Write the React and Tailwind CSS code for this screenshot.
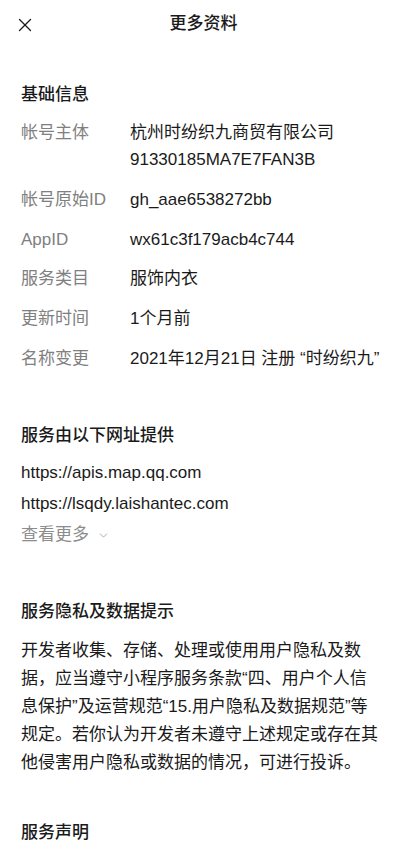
import { X, ChevronDown } from 'lucide-react'

const FONT = { fontFamily: '"Liberation Sans", "Noto Sans CJK SC", sans-serif' }

const basics = [
  { label: '帐号主体', value: ['杭州时纷织九商贸有限公司', '91330185MA7E7FAN3B'] },
  { label: '帐号原始ID', value: ['gh_aae6538272bb'] },
  { label: 'AppID', value: ['wx61c3f179acb4c744'] },
  { label: '服务类目', value: ['服饰内衣'] },
  { label: '更新时间', value: ['1个月前'] },
  { label: '名称变更', value: ['2021年12月21日 注册 “时纷织九”'] },
]

const urls = ['https://apis.map.qq.com', 'https://lsqdy.laishantec.com']

// wrapped the same way the app does it
const privacy = [
  '开发者收集、存储、处理或使用用户隐私及数',
  '据，应当遵守小程序服务条款“四、用户个人信',
  '息保护”及运营规范“15.用户隐私及数据规范”等',
  '规定。若你认为开发者未遵守上述规定或存在其',
  '他侵害用户隐私或数据的情况，可进行投诉。',
]

function Heading({ children, className = '' }) {
  return (
    <h2 className={`text-[17px] font-medium leading-[24px] text-[#1a1a1a] ${className}`}>
      {children}
    </h2>
  )
}

export default function App() {
  return (
    <div className="h-[842px] w-[407px] overflow-hidden bg-white" style={FONT}>
      <header className="relative flex h-[48px] items-center justify-center">
        <button className="absolute left-[14px] top-[14px] grid h-[20px] w-[20px] place-items-center text-[#1a1a1a]">
          <X size={22} strokeWidth={1.4} />
        </button>
        <h1 className="text-[17px] font-medium text-[#1a1a1a]">更多资料</h1>
      </header>

      <div className="px-[21px]">
        <Heading className="mt-[35px]">基础信息</Heading>
        <div className="mt-[12px] flex flex-col gap-[12.8px]">
          {basics.map((row) => (
            <div key={row.label} className="flex text-[17px] leading-[27px]">
              <span className="w-[109px] shrink-0 text-[#808080]">{row.label}</span>
              <div className="whitespace-nowrap text-[#1a1a1a]">
                {row.value.map((v) => (
                  <p key={v}>{v}</p>
                ))}
              </div>
            </div>
          ))}
        </div>

        <Heading className="mt-[52px]">服务由以下网址提供</Heading>
        <div className="mt-[9px] flex flex-col text-[17px] leading-[31px] text-[#1a1a1a]">
          {urls.map((u) => (
            <p key={u}>{u}</p>
          ))}
          <button className="flex items-center gap-[8px] text-[#8c8c8c]">
            查看更多 <ChevronDown size={13} strokeWidth={1.3} className="mt-[2px]" />
          </button>
        </div>

        <Heading className="mt-[50px]">服务隐私及数据提示</Heading>
        <div className="mt-[13px] whitespace-nowrap text-[17px] leading-[28px] text-[#1a1a1a]">
          {privacy.map((line) => (
            <p key={line}>{line}</p>
          ))}
        </div>

        <Heading className="mt-[44px]">服务声明</Heading>
      </div>
    </div>
  )
}
